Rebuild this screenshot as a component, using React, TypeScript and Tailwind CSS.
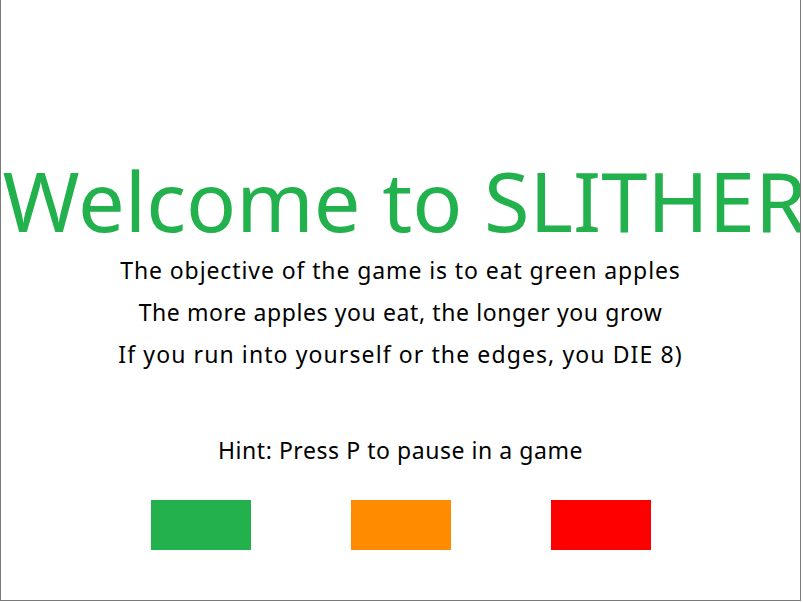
import React from "react";

export default function App() {
  const font = { fontFamily: '"Comic Sans MS", "Noto Sans", sans-serif' };
  return (
    <div className="w-[803px] h-[602px] bg-white" style={font}>
      <div className="w-[801px] h-[601px] border-l border-r border-b border-[#7a7a7a] overflow-hidden flex flex-col items-center text-black">
        <div className="mt-[150px] ml-[8px] h-[100px] leading-[100px] text-[83px] text-[#22b14c] whitespace-nowrap">
          Welcome to SLITHER
        </div>
        <div className="mt-[-1px] flex flex-col items-center text-[23px] tracking-[0.9px] leading-[42px] whitespace-nowrap">
          <div>The objective of the game is to eat green apples</div>
          <div className="tracking-[0.6px]">The more apples you eat, the longer you grow</div>
          <div className="tracking-[1.1px]">If you run into yourself or the edges, you DIE 8)</div>
        </div>
        <div className="mt-[54px] text-[23px] tracking-[0.55px] leading-[42px] whitespace-nowrap">
          Hint: Press P to pause in a game
        </div>
        <div className="mt-[29px] w-[800px] flex">
          <div className="ml-[150px] w-[100px] h-[50px] bg-[#22b14c]" />
          <div className="ml-[100px] w-[100px] h-[50px] bg-[#ff8c00]" />
          <div className="ml-[100px] w-[100px] h-[50px] bg-[#ff0000]" />
        </div>
      </div>
    </div>
  );
}
